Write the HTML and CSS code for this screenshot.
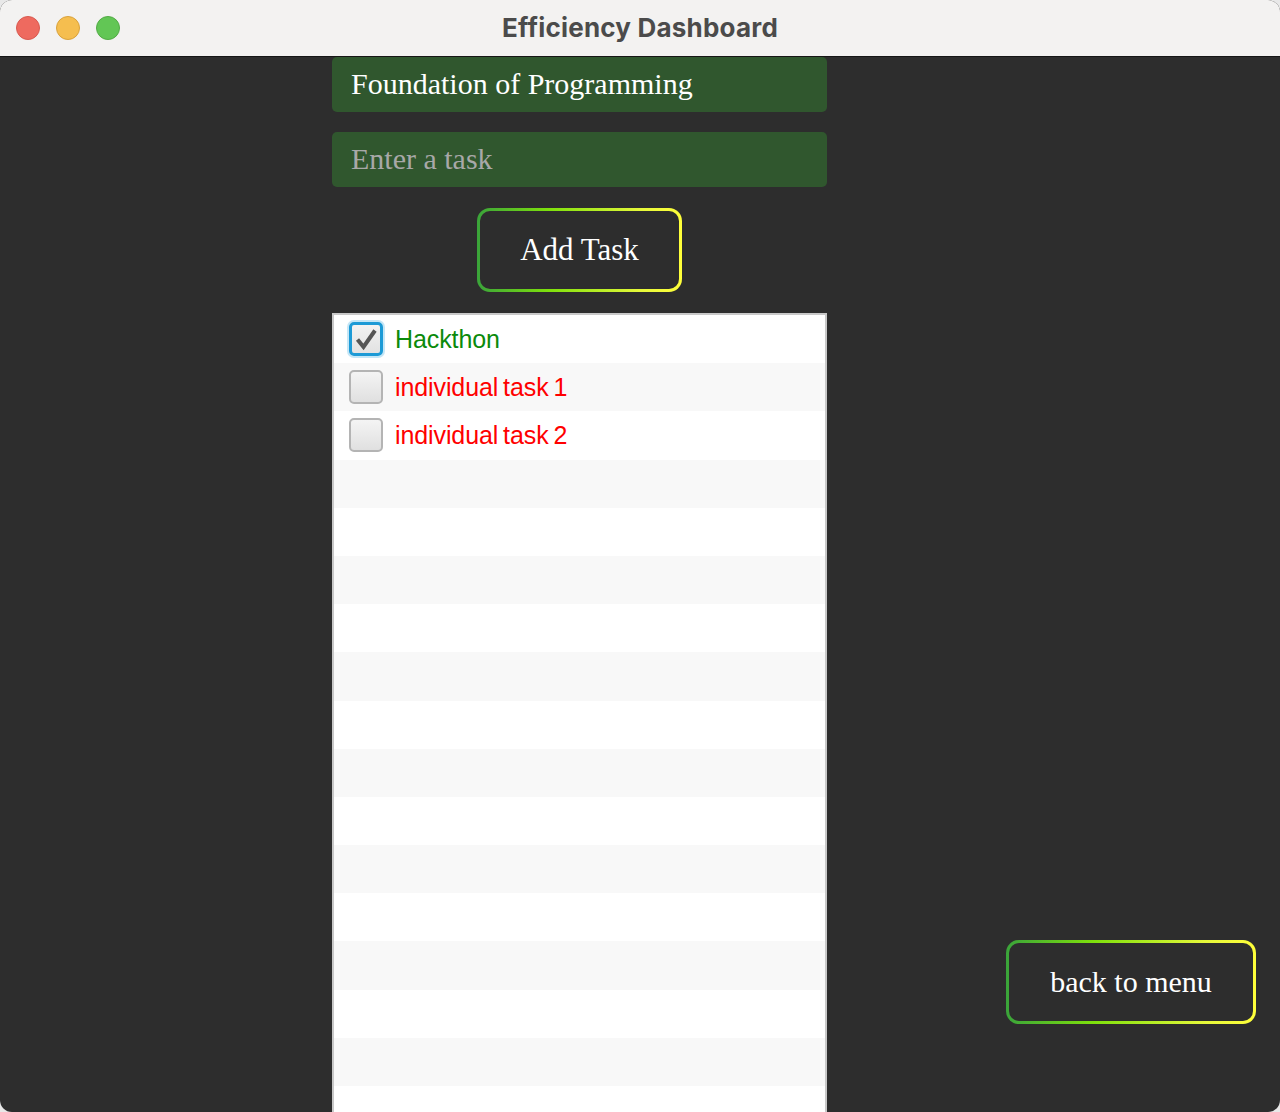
FILE: index.html
```html
<!DOCTYPE html>
<html>
<head>
<meta charset="utf-8">
<link rel="stylesheet" href="styles.css">
</head>
<body>
<div class="window">
  <div class="titlebar">
    <div class="lights">
      <span class="light red"></span>
      <span class="light yellow"></span>
      <span class="light green"></span>
    </div>
    <div class="title">Efficiency Dashboard</div>
  </div>
  <div class="content">
    <div class="column">
      <div class="field">Foundation of Programming</div>
      <div class="field placeholder">Enter a task</div>
      <div class="btn-row"><div class="gbtn add"><span>Add Task</span></div></div>
      <div class="list">
        <div class="row"><span class="cb checked"><svg width="26" height="26" viewBox="0 0 26 26"><path d="M4.5 13.5 L10.5 21 L22 4.5" fill="none" stroke="#555" stroke-width="4" stroke-linejoin="miter" stroke-linecap="butt"/></svg></span><span class="lbl done">Hackthon</span></div>
        <div class="row"><span class="cb"></span><span class="lbl todo">individual task 1</span></div>
        <div class="row"><span class="cb"></span><span class="lbl todo">individual task 2</span></div>
        <div class="row"></div><div class="row"></div><div class="row"></div><div class="row"></div>
        <div class="row"></div><div class="row"></div><div class="row"></div><div class="row"></div>
        <div class="row"></div><div class="row"></div><div class="row"></div><div class="row"></div>
        <div class="row"></div><div class="row"></div>
      </div>
    </div>
    <div class="gbtn back"><span>back to menu</span></div>
  </div>
</div>
</body>
</html>
```
FILE: styles.css
```css
html, body {
  margin: 0;
  padding: 0;
  background: #e8e8e8;
}
.window {
  width: 1280px;
  height: 1112px;
  border-radius: 12px;
  overflow: hidden;
  background: #2d2d2d;
  display: flex;
  flex-direction: column;
}
.titlebar {
  height: 56px;
  background: #f3f2f1;
  border-bottom: 1px solid #161616;
  display: flex;
  align-items: center;
  justify-content: center;
  position: relative;
  flex: none;
}
.lights {
  position: absolute;
  left: 16px;
  top: 16px;
  display: flex;
  gap: 16px;
}
.light {
  width: 24px;
  height: 24px;
  border-radius: 50%;
  box-sizing: border-box;
}
.red { background: #ee6a5f; border: 1px solid #d85a50; }
.yellow { background: #f5be4f; border: 1px solid #d9a23c; }
.green { background: #62c655; border: 1px solid #52ab45; }
.title {
  font-family: "Inter", "Liberation Sans", sans-serif;
  font-weight: 700;
  font-size: 26px;
  color: #4b4b4b;
  letter-spacing: 0.2px;
  margin-top: -2px;
}
.content {
  flex: 1;
  position: relative;
  display: flex;
  justify-content: flex-start;
  padding-left: 332px;
}
.column {
  width: 495px;
  display: flex;
  flex-direction: column;
}
.field {
  height: 55px;
  background: #30572e;
  border-radius: 5px;
  box-sizing: border-box;
  padding-left: 19px;
  padding-bottom: 1px;
  display: flex;
  align-items: center;
  font-family: "Liberation Serif", serif;
  font-size: 30px;
  color: #ffffff;
  margin-bottom: 20px;
}
.field.placeholder {
  color: #a8a8a8;
}
.btn-row {
  display: flex;
  justify-content: center;
  margin-top: 1px;
  margin-bottom: 21px;
}
.gbtn {
  box-sizing: border-box;
  border: 3px solid transparent;
  border-radius: 13px;
  background:
    linear-gradient(#2d2d2d, #2d2d2d) padding-box,
    linear-gradient(90deg, #3aa43a 0%, #7ee00c 35%, #e6f83a 80%, #ffff3a 100%) border-box;
  display: flex;
  align-items: center;
  justify-content: center;
  font-family: "Liberation Serif", serif;
  font-size: 31px;
  color: #ffffff;
}
.gbtn.add {
  width: 205px;
  height: 84px;
}
.gbtn.back {
  position: absolute;
  left: 1006px;
  top: 883px;
  width: 250px;
  height: 84px;
  font-size: 30px;
}
.list {
  flex: 1;
  background: #ffffff;
  border: 2px solid #c8c8c8;
  border-bottom: none;
  overflow: hidden;
}
.row {
  height: 48.2px;
  display: flex;
  align-items: center;
  padding-left: 15px;
  box-sizing: border-box;
}
.row:nth-child(even) {
  background: #f8f8f8;
}
.cb {
  width: 34px;
  height: 34px;
  box-sizing: border-box;
  border: 2px solid #b4b4b4;
  border-radius: 5px;
  background: linear-gradient(#f4f4f4, #e0e0e0);
  display: flex;
  align-items: center;
  justify-content: center;
  flex: none;
}
.cb.checked {
  border: 3px solid #1c9ad6;
  box-shadow: 0 0 0 2px #c4e6f6;
  background: linear-gradient(#f2f2f2, #e2e2e2);
}
.lbl {
  margin-left: 12px;
  font-family: "Liberation Sans", "Inter", sans-serif;
  font-size: 25px;
  word-spacing: -2px;
  letter-spacing: -0.1px;
}
.done { color: #0b8a0b; }
.todo { color: #ff0000; }
```
